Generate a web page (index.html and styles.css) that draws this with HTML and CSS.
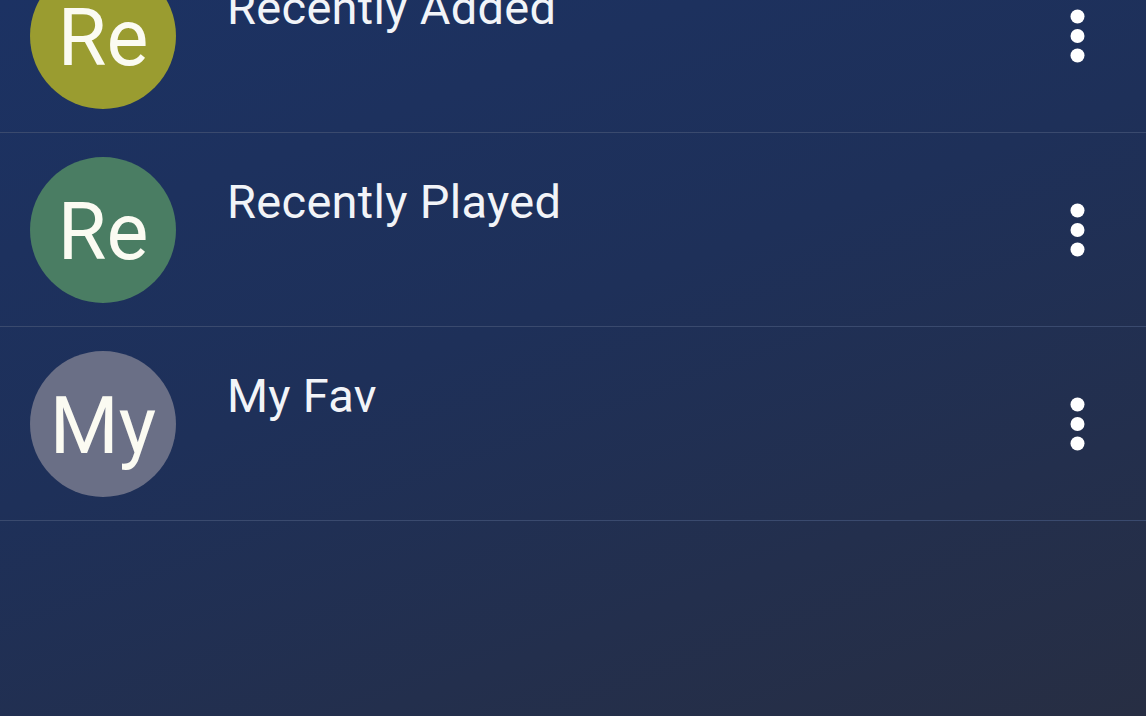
FILE: index.html
```html
<!DOCTYPE html>
<html lang="en">
    <head>
        <meta charset="utf-8">
        <meta name="viewport" content="width=device-width, initial-scale=1.0">
        <title>Playlists</title>
        <link rel="stylesheet" href="styles.css">
    </head>
    <body>
        <ul class="playlist-list">
            <li class="playlist-row">
                <div class="avatar avatar-olive">Re</div>
                <div class="playlist-title">Recently Added</div>
                <button class="more-btn" aria-label="More options">
                    <svg width="15" height="54" viewBox="0 0 15 54"><circle cx="7.5" cy="7.5" r="7"/><circle cx="7.5" cy="27" r="7"/><circle cx="7.5" cy="46.5" r="7"/></svg>
                </button>
            </li>
            <li class="playlist-row">
                <div class="avatar avatar-green">Re</div>
                <div class="playlist-title">Recently Played</div>
                <button class="more-btn" aria-label="More options">
                    <svg width="15" height="54" viewBox="0 0 15 54"><circle cx="7.5" cy="7.5" r="7"/><circle cx="7.5" cy="27" r="7"/><circle cx="7.5" cy="46.5" r="7"/></svg>
                </button>
            </li>
            <li class="playlist-row">
                <div class="avatar avatar-grey">My</div>
                <div class="playlist-title">My Fav</div>
                <button class="more-btn" aria-label="More options">
                    <svg width="15" height="54" viewBox="0 0 15 54"><circle cx="7.5" cy="7.5" r="7"/><circle cx="7.5" cy="27" r="7"/><circle cx="7.5" cy="46.5" r="7"/></svg>
                </button>
            </li>
        </ul>
    </body>
</html>
```

FILE: styles.css
```css
html, body {
    height: 100%;
}

body {
    margin: 0;
    overflow: hidden;
    background: linear-gradient(160deg, #1c3263 0%, #1e3059 45%, #232f4d 75%, #272e43 100%);
    color: #f2f4f8;
    font-family: Roboto, "Liberation Sans", sans-serif;
}

/* list is scrolled: first row is partly hidden */
.playlist-list {
    list-style: none;
    margin: -61px 0 0 0;
    padding: 0;
}

.playlist-row {
    display: flex;
    align-items: center;
    padding: 24px 45px 23px 30px;
    border-bottom: 1px solid #3a4a6e;
}

.avatar {
    flex: 0 0 146px;
    height: 146px;
    box-sizing: border-box;
    padding-top: 5px;
    border-radius: 50%;
    display: flex;
    align-items: center;
    justify-content: center;
    font-size: 79px;
    line-height: 1;
    color: #fbfbf2;
}

.avatar-olive {
    background-color: #9a9c30;
}

.avatar-green {
    background-color: #4a7d63;
}

.avatar-grey {
    background-color: #6a6f86;
}

.playlist-title {
    flex: 1;
    align-self: flex-start;
    margin: 17px 0 0 51px;
    font-size: 47px;
    letter-spacing: 0.3px;
    line-height: normal;
}

.more-btn {
    width: 48px;
    height: 60px;
    padding: 0;
    border: 0;
    background: none;
    display: flex;
    align-items: center;
    justify-content: center;
    fill: #ffffff;
}
```
